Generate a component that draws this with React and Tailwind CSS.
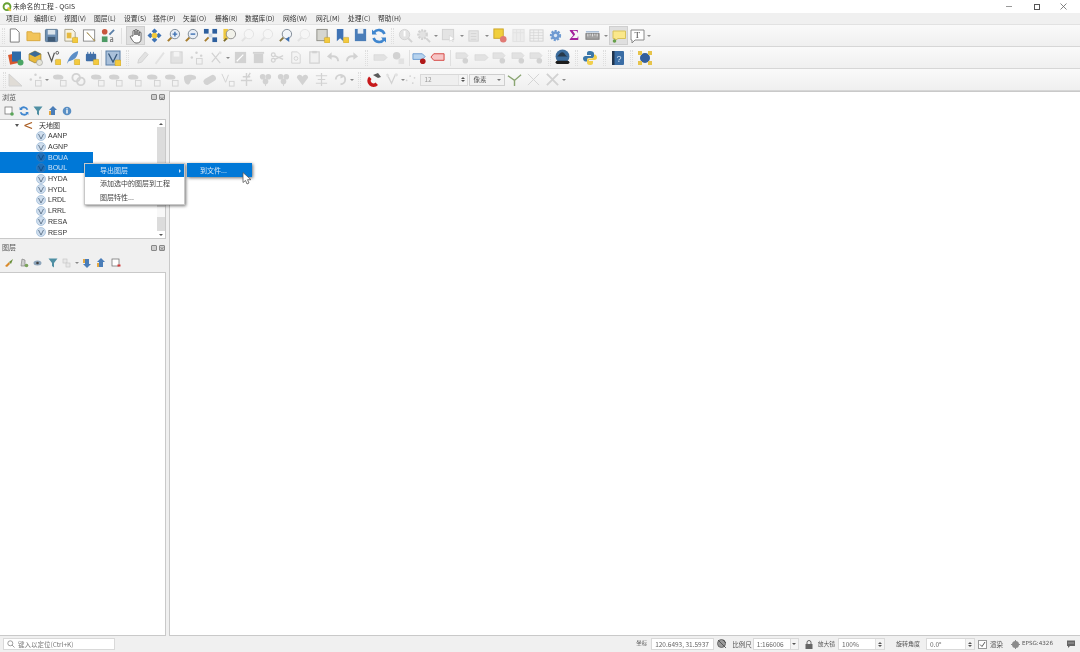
import React from 'react';

const font = 'font-["Noto_Sans_CJK_SC","Liberation_Sans",sans-serif]';

const Svg = ({ children, size = 15 }) => (
  <svg width={size} height={size} viewBox="0 0 16 16" fill="none">{children}</svg>
);

const Badge = ({ c = '#f3c93f' }) => <rect x="10" y="10" width="6" height="6" rx="1" fill={c} stroke="#b89a2a" strokeWidth="0.5" />;
const G = '#d2d2d2';
const G2 = '#e2e2e2';

const icons = {
  newDoc: <Svg><path d="M3.5 1h6l3.5 3.5V15h-9.500z" fill="#fff" stroke="#777" /></Svg>,
  open: <Svg><path d="M1 4h5l1 1.500h8V13.500H1z" fill="#f2c45a" stroke="#d9a73c" /></Svg>,
  save: <Svg><rect x="1.500" y="1.500" width="13" height="13" rx="1" fill="#6d8fb3" stroke="#56738f" /><rect x="4" y="2" width="8" height="5" fill="#dbe4ec" /><rect x="4" y="9.500" width="8" height="5" fill="#3f5a76" /></Svg>,
  saveAs: <Svg><path d="M2 1.500h8l3 3V14H2z" fill="#f7f3e2" stroke="#a5a08a" /><rect x="4" y="5" width="5" height="6" fill="#e6b93e" /><Badge /></Svg>,
  print: <Svg><rect x="1.500" y="2" width="12" height="12" fill="#fff" stroke="#8a8a8a" /><path d="M5 5l6 6 2 3 1-1-3-2-5-6z" fill="#d6b35a" stroke="#8c7a46" strokeWidth="0.5" /></Svg>,
  style: <Svg><circle cx="5" cy="4" r="3" fill="#c8553d" /><rect x="2" y="9" width="6" height="6" fill="#4c9a64" /><path d="M10 7l5-5" stroke="#5a7fa8" strokeWidth="2" /><text x="10" y="15" fontSize="8" fill="#666">a</text></Svg>,
  hand: <Svg size={16}><path d="M5 8V3.500a1 1 0 0 1 2 0V7V2.500a1 1 0 0 1 2 0V7V3.500a1 1 0 0 1 2 0V8V5a1 1 0 0 1 2 0v6c0 2.500-1.500 4-4 4H8c-2 0-3-2-4.500-4L2.500 9.200c-.6-1 .8-1.800 1.500-1z" fill="#fff" stroke="#444" strokeWidth="0.8" /></Svg>,
  pan: <Svg><path d="M8 0.500l3 3-3 3-3-3zM3.500 5l3 3-3 3-3-3zM12.500 5l3 3-3 3-3-3zM8 9.500l3 3-3 3-3-3z" fill="#3f73b5" /><circle cx="8" cy="8" r="3" fill="#f1c93b" /></Svg>,
  zoomIn: <Svg><path d="M2 14l4-4" stroke="#a67c2d" strokeWidth="2.200" /><circle cx="9.500" cy="6.500" r="5" fill="#e8eef6" stroke="#7b8794" /><path d="M7 6.500h5M9.500 4v5" stroke="#3d70b2" strokeWidth="1.500" /></Svg>,
  zoomOut: <Svg><path d="M2 14l4-4" stroke="#a67c2d" strokeWidth="2.200" /><circle cx="9.500" cy="6.500" r="5" fill="#e8eef6" stroke="#7b8794" /><path d="M7 6.500h5" stroke="#3d70b2" strokeWidth="1.500" /></Svg>,
  zoomFull: <Svg><path d="M2 14l4-4" stroke="#a67c2d" strokeWidth="2" /><rect x="1" y="1" width="5" height="5" fill="#2d5f9e" /><rect x="10" y="1" width="5" height="5" fill="#2d5f9e" /><rect x="10" y="10" width="5" height="5" fill="#2d5f9e" /><rect x="6" y="6" width="4" height="4" fill="#cbd8e6" /></Svg>,
  zoomLayer: <Svg><rect x="1.500" y="1" width="5" height="11" fill="#efc840" /><path d="M2 14l3-3" stroke="#7a6a2a" strokeWidth="2" /><circle cx="9.500" cy="6.500" r="5" fill="#f2f2ea" stroke="#8c8c8c" /></Svg>,
  zoomOff: <Svg><path d="M2 14l4-4" stroke={G2} strokeWidth="2" /><circle cx="9.500" cy="6.500" r="5" fill="#f6f6f6" stroke={G2} /></Svg>,
  zoomLast: <Svg><path d="M2 14l4-4" stroke="#8b7a44" strokeWidth="2" /><circle cx="9.500" cy="6.500" r="5" fill="#f2f5f9" stroke="#7d8894" /><path d="M8 12l4-3v6z" fill="#3d70b2" /></Svg>,
  bookmark: <Svg><rect x="2" y="1.500" width="11" height="12" fill="#d6d6d0" stroke="#8e8e86" /><Badge /></Svg>,
  bookmarkBlue: <Svg><path d="M3 1h7v13l-3.500-3L3 14z" fill="#3f73b5" /><Badge /></Svg>,
  mapSave: <Svg><rect x="2" y="1" width="12" height="13" fill="#4a7db8" /><rect x="5" y="1" width="6" height="5" fill="#e8eef4" /></Svg>,
  refresh: <Svg size={16}><path d="M13.500 6A6 6 0 0 0 3 4.500M2.500 10A6 6 0 0 0 13 11.500" stroke="#3f86cf" strokeWidth="2.600" /><path d="M1 1.500v5h5zM15 14.500v-5h-5z" fill="#3f86cf" /></Svg>,
  identify: <Svg><circle cx="7" cy="7" r="5.500" fill={G2} stroke={G} /><rect x="6" y="3" width="2" height="6" fill="#fff" /><path d="M11 11l4 4" stroke={G} strokeWidth="2" /></Svg>,
  gear: <Svg><circle cx="7" cy="7" r="4.500" fill={G2} stroke={G} strokeWidth="2.500" strokeDasharray="2 1.200" /><path d="M11 11l4 4" stroke={G} strokeWidth="2" /></Svg>,
  select: <Svg><rect x="1.500" y="1.500" width="12" height="11" fill="#e4e4e4" stroke={G} /><path d="M9 8l5 3-2 1 1 3-2-2-2 1z" fill="#fff" stroke={G} strokeWidth="0.6" /></Svg>,
  list: <Svg><rect x="2" y="3" width="10" height="11" fill="#e6e6e6" stroke={G} /><path d="M4 6h6M4 9h6M4 12h6" stroke={G} /></Svg>,
  deselect: <Svg><rect x="2" y="1" width="10" height="10" fill="#f1cf3c" stroke="#caa52a" /><circle cx="12" cy="12" r="3.500" fill="#e07a74" /></Svg>,
  table: <Svg><rect x="2" y="1.500" width="12" height="13" fill="#ececec" stroke={G2} /><path d="M6 2v12M10 2v12M2 5h12" stroke={G2} /></Svg>,
  table2: <Svg><rect x="1" y="2" width="14" height="12" fill="#f1f1f1" stroke={G} /><path d="M1 5h14M1 8h14M1 11h14M5 2v12M10 2v12" stroke={G} strokeWidth="0.7" /></Svg>,
  cog: <Svg><circle cx="8" cy="8" r="4.500" fill="#6f9bd2" stroke="#6f9bd2" strokeWidth="3" strokeDasharray="2 1.300" /><circle cx="8" cy="8" r="1.800" fill="#dce8f5" /></Svg>,
  sigma: <span className="text-[15px] leading-none font-bold text-[#a3209c] font-['Liberation_Serif',serif]">Σ</span>,
  ruler: <Svg><rect x="1" y="6" width="14" height="6" fill="#a2a2a2" stroke="#7a7a7a" /><path d="M3 6v3M5.500 6v2M8 6v3M10.500 6v2M13 6v3" stroke="#fff" strokeWidth="0.7" /><rect x="1" y="3.500" width="14" height="1.200" fill="#8ea9c8" /></Svg>,
  tip: <Svg size={16}><path d="M2 3h12.500v7.500H7l-3 2v-2H2z" fill="#fbe88a" stroke="#d8c25c" /><circle cx="3.500" cy="13" r="1.800" fill="#67a04a" /></Svg>,
  textBox: <Svg size={16}><path d="M2 2h13v10H6l-3 3v-3H2z" fill="#fff" stroke="#8a8a8a" /><text x="5.500" y="10" fontSize="9" fontFamily="Liberation Serif" fill="#444">T</text></Svg>,
  addLayers: <Svg size={16}><rect x="1" y="4" width="9" height="10" fill="#d9572c" transform="rotate(-12 5 9)" /><rect x="4" y="1.500" width="9" height="10" fill="#2e6aa8" /><circle cx="12.500" cy="12.500" r="3" fill="#4aa564" /></Svg>,
  addVec: <Svg size={16}><path d="M8 1l6 3v6l-6 3-6-3V4z" fill="#e9b93b" stroke="#8c7222" strokeWidth="0.6" /><path d="M8 1l6 3-6 3-6-3z" fill="#3c6a98" /><circle cx="12.500" cy="12.500" r="3" fill="#e4e4d8" stroke="#888" strokeWidth="0.5" /></Svg>,
  vertex: <Svg><path d="M2 2l4 10 3-9" stroke="#555" strokeWidth="1.300" /><circle cx="12" cy="3" r="1.500" stroke="#555" /><Badge /></Svg>,
  feather: <Svg><path d="M2 15C4 7 8 3 14 1c0 6-4 10-10 11z" fill="#5c8ec7" /><Badge /></Svg>,
  chip: <Svg><rect x="2" y="4" width="11" height="8" rx="1" fill="#3f6ea8" /><path d="M4 2v3M7 2v3M10 2v3" stroke="#3f6ea8" /><Badge /></Svg>,
  vBox: <Svg size={16}><rect x="1" y="1" width="14" height="14" fill="#a9c0da" stroke="#5b7ea6" /><path d="M3.500 3.500L8 12l4-8" stroke="#38577a" strokeWidth="1.300" /><Badge /></Svg>,
  pencil: <Svg><path d="M3 14l1-4 7-8 3 3-7 8z" fill={G2} stroke={G} /></Svg>,
  pen: <Svg><path d="M3 14l9-12 1.500 1.500-9 12z" fill={G2} /></Svg>,
  saveOff: <Svg><rect x="2" y="2" width="12" height="12" fill={G2} stroke={G} /><rect x="5" y="2" width="6" height="5" fill="#f4f4f4" /></Svg>,
  dots: <Svg><circle cx="3" cy="8" r="1.300" fill={G} /><circle cx="8" cy="3" r="1.300" fill={G} /><circle cx="13" cy="6" r="1.300" fill={G} /><rect x="8" y="9" width="6" height="6" fill="#f2f2f2" stroke={G} /></Svg>,
  xNodes: <Svg><path d="M3 3l9 11M12 2L3 13" stroke={G} strokeWidth="1.300" /><circle cx="12" cy="3" r="1.500" fill={G2} /></Svg>,
  editBox: <Svg><rect x="2" y="2" width="12" height="12" fill={G} /><path d="M4 12l7-7" stroke="#fff" strokeWidth="1.300" /></Svg>,
  trash: <Svg><rect x="3" y="4" width="10" height="10" fill={G} /><rect x="2" y="2" width="12" height="2" fill={G} /></Svg>,
  cut: <Svg><circle cx="3.500" cy="5" r="2" stroke={G} strokeWidth="1.300" /><circle cx="3.500" cy="11" r="2" stroke={G} strokeWidth="1.300" /><path d="M5 6l9 4M5 10l9-4" stroke={G} strokeWidth="1.300" /></Svg>,
  copy: <Svg><path d="M4 2h6l3 3v9H4z" fill="#f4f4f4" stroke={G} /><circle cx="8.500" cy="9" r="2" stroke={G} /></Svg>,
  paste: <Svg><rect x="3" y="2" width="10" height="12" fill="#f0f0f0" stroke={G} strokeWidth="1.300" /><rect x="5.500" y="1" width="5" height="2.500" fill={G} /></Svg>,
  undo: <Svg><path d="M13 12c0-4-3-6-8-5" stroke={G} strokeWidth="2.200" /><path d="M6 2.500v8L1 7z" fill={G} /></Svg>,
  redo: <Svg><path d="M3 12c0-4 3-6 8-5" stroke={G} strokeWidth="2.200" /><path d="M10 2.500v8L15 7z" fill={G} /></Svg>,
  label: <Svg><path d="M1 5h11l3 3-3 3H1z" fill={G2} stroke={G} strokeWidth="0.6" /></Svg>,
  labelPin: <Svg><circle cx="6" cy="6" r="4" fill={G} /><rect x="8" y="9" width="6" height="6" fill={G2} /></Svg>,
  labelRed: <Svg><path d="M1 4h10l3 3-3 3H1z" fill="#b7d3ee" stroke="#6b9bd0" /><circle cx="11.500" cy="12" r="3" fill="#b01818" /></Svg>,
  labelPink: <Svg><path d="M4 4h11v7H4L1 7.500z" fill="#f6c5c5" stroke="#d4423e" /></Svg>,
  labelDot: <Svg><path d="M1 3h10l3 3-3 3H1z" fill={G2} stroke={G} strokeWidth="0.6" /><circle cx="11" cy="11.500" r="3" fill={G} /></Svg>,
  globeCar: <Svg size={17}><circle cx="8" cy="7" r="6.500" fill="#3c6c9c" /><path d="M3 7c2-2 3-4 5-4s2 3 5 4" fill="#27394a" /><rect x="1.500" y="11" width="13" height="3" rx="1.500" fill="#1c1c1c" /></Svg>,
  python: <Svg size={16}><path d="M8 1C5 1 5 2.500 5 3.500V5h4v1H3.500C2 6 1 7 1 8.500S2 11.500 3.500 11.500H5V10c0-1.500 1-2 2.500-2h3C12 8 12 6.500 12 5.500v-2C12 2 10.500 1 8 1z" fill="#3b77a8" /><path d="M8 15c3 0 3-1.500 3-2.500V11H7v-1h5.500c1.500 0 2.500-1 2.500-2.500S14 4.500 12.500 4.500H12V6c0 1.500-1 2.500-2.500 2.500h-3C5 8.500 5 10 5 11v1.500C5 14 5.500 15 8 15z" fill="#f1cf4c" /></Svg>,
  help: <Svg size={16}><rect x="2" y="1" width="12" height="14" rx="1" fill="#3a6da5" /><rect x="2" y="1" width="2.500" height="14" fill="#20344d" /><text x="6.500" y="11.500" fontSize="9" fill="#cfe0f2" fontFamily="Liberation Sans">?</text></Svg>,
  plugin: <Svg size={16}><path d="M3 3l10 10M13 3L3 13" stroke="#6c8a34" strokeWidth="1" /><circle cx="8" cy="8" r="5" fill="#335e9c" /><rect x="1" y="1" width="4" height="4" fill="#e6c34a" /><rect x="11" y="1" width="4" height="4" fill="#e6c34a" /><rect x="1" y="11" width="4" height="4" fill="#e6c34a" /><rect x="11" y="11" width="4" height="4" fill="#e6c34a" /></Svg>,
  digit: <Svg size={16}><path d="M1 14V2l13 12z" fill="#e0dcd6" stroke={G} /></Svg>,
  blobs: <Svg><path d="M1 5c0-3 10-3 11 0s-3 3-5 3-6 0-6-3z" fill={G} /><rect x="9" y="9" width="6" height="6" fill="#f2f2f2" stroke={G} /></Svg>,
  rings: <Svg><circle cx="5.500" cy="6" r="4" stroke={G} strokeWidth="2" /><circle cx="10.500" cy="10" r="4" stroke={G} strokeWidth="2" /></Svg>,
  blob: <Svg><path d="M1 6c0-4 13-4 13 0 0 3-5 1-6 4s-2 4-4 3-3-4-3-7z" fill={G} /></Svg>,
  pill: <Svg><rect x="1" y="5" width="14" height="7" rx="3.500" fill={G} transform="rotate(-30 8 8)" /></Svg>,
  splitV: <Svg><path d="M2 2l4 9 3-8" stroke={G} /><rect x="10" y="10" width="5" height="5" fill="#f5f5f5" stroke={G} /></Svg>,
  cross: <Svg><path d="M8 1v14M4 5h8M2 9h12M12 1l-3 5" stroke={G} strokeWidth="1.500" /></Svg>,
  clover: <Svg><circle cx="5" cy="5" r="3" fill={G} /><circle cx="11" cy="5" r="3" fill={G} /><circle cx="8" cy="10" r="3" fill={G} /><path d="M8 10v5" stroke={G} /></Svg>,
  heart: <Svg><path d="M8 14L2 6c0-4 5-4 6-1 1-3 6-3 6 1z" fill={G} /></Svg>,
  spine: <Svg><path d="M8 1v14M2 4h12M4 8h8M2 12h12" stroke={G} strokeWidth="1.300" /></Svg>,
  rotate: <Svg><path d="M3 8a5 5 0 1 1 5 5" stroke={G} strokeWidth="2" /><path d="M8 2l4 3-4 2z" fill={G} /></Svg>,
  magnet: <Svg size={16}><path d="M3 4.500A6 6 0 1 0 12 13l-2.500-2.500A2.500 2.500 0 1 1 5.500 7z" fill="#c7181a" /><path d="M7 3l5-2 3 4-3 1z" fill="#5a5a5a" /></Svg>,
  vSnap: <Svg><path d="M2 2l5 10 4-9" stroke={G} strokeWidth="1.300" /><circle cx="12" cy="3" r="1.800" fill={G2} /><circle cx="3" cy="4" r="1.500" fill={G2} /></Svg>,
  dotsOff: <Svg><circle cx="3" cy="9" r="1" fill={G} /><circle cx="7" cy="4" r="1" fill={G} /><circle cx="12" cy="6" r="1" fill={G} /><circle cx="10" cy="12" r="1" fill={G} /></Svg>,
  trim: <Svg><path d="M1 4l7 5 7-6M8 9v6" stroke="#8aa572" strokeWidth="1.500" /></Svg>,
  crossOff: <Svg><path d="M2 2l12 12M14 2L2 14" stroke={G} /></Svg>,
  merge: <Svg><path d="M2 2l6 6 6-6M2 14l6-6 6 6" stroke={G} strokeWidth="2" /></Svg>,
};

const T = ({ w = 18.7, name, active }) => (
  <div className={`flex h-[19px] shrink-0 items-center justify-center ${active ? 'bg-[#dfdfdf] border border-[#cfcfcf]' : ''}`} style={{ width: w }}>
    {icons[name]}
  </div>
);
const Grip = ({ w = 8 }) => (
  <div className="flex h-[16px] shrink-0 justify-center" style={{ width: w }}>
    <div className="w-[3px] h-full border-x border-dotted border-[#dedede]" />
  </div>
);
const Dd = ({ w = 6 }) => (
  <div className="flex h-[16px] shrink-0 items-center justify-center" style={{ width: w }}>
    <div className="border-x-[2px] border-t-[2.5px] border-x-transparent border-t-[#8a8a8a]" />
  </div>
);
const Sep = ({ w = 7 }) => (
  <div className="flex h-[16px] shrink-0 justify-center" style={{ width: w }}>
    <div className="w-px h-full bg-[#e0e0e0]" />
  </div>
);

const toolbar1 = ['newDoc', 'open', 'save', 'saveAs', 'print', 'style'];
const toolbar1b = ['pan', 'zoomIn', 'zoomOut', 'zoomFull', 'zoomLayer', 'zoomOff', 'zoomOff', 'zoomLast', 'zoomOff', 'bookmark', 'bookmarkBlue', 'mapSave', 'refresh'];
const toolbar2a = ['addLayers', 'addVec', 'vertex', 'feather', 'chip'];
const toolbar2c = ['trash', 'cut', 'copy', 'paste', 'undo', 'redo'];
const toolbar3a = ['blobs', 'rings', 'blobs', 'blobs', 'blobs', 'blobs', 'blobs', 'blob', 'pill', 'splitV', 'cross', 'clover', 'clover', 'heart', 'spine', 'rotate'];

const Toolbar = ({ children }) => (
  <div className="flex h-[22px] shrink-0 items-center border-b border-[#d6d6d6] bg-gradient-to-b from-[#fafafa] to-[#efefef] pl-[1px]">
    {children}
  </div>
);

const Win = () => (
  <div className="flex h-[13px] shrink-0 items-center bg-white pl-[2px]">
    <svg width="10" height="10" viewBox="0 0 16 16" fill="none"><circle cx="8" cy="7.500" r="5.500" stroke="#66a032" strokeWidth="3" /><path d="M9 9l5 5" stroke="#e6c43a" strokeWidth="3" /></svg>
    <span className="ml-[1px] text-[6.800px] leading-none text-[#333]">未命名的工程 - QGIS</span>
    <div className="ml-auto flex items-center">
      <div className="h-px w-[6px] bg-[#999] mr-[22px]" />
      <div className="mr-[20px] h-[6px] w-[6px] border border-[#555]" />
      <svg width="7" height="7" viewBox="0 0 7 7" className="mr-[13px]"><path d="M0.500 0.500l6 6M6.500 0.500l-6 6" stroke="#666" strokeWidth="0.800" /></svg>
    </div>
  </div>
);

const menus = [
  ['项目(J)', 28], ['编辑(E)', 30], ['视图(V)', 30], ['图层(L)', 30], ['设置(S)', 29], ['插件(P)', 30], ['矢量(O)', 32], ['栅格(R)', 30], ['数据库(D)', 38], ['网络(W)', 33], ['网孔(M)', 32], ['处理(C)', 30], ['帮助(H)', 30],
];

const PanelBtns = () => (
  <div className="ml-auto flex gap-[2px] pr-[1px]">
    <div className="h-[6px] w-[6px] rounded-[1px] border border-[#888] bg-[#cfcfcf]" />
    <div className="flex h-[6px] w-[6px] items-center justify-center rounded-[1px] border border-[#888] bg-[#cfcfcf] text-[5px] leading-none text-[#444]">×</div>
  </div>
);

function VIcon({ dark }) {
  return (
    <svg width="10" height="10" viewBox="0 0 10 10" className="shrink-0">
      <circle cx="5" cy="5" r="4.500" fill={dark ? '#1f6fb8' : '#cfdeee'} stroke={dark ? '#3b7fbd' : '#8fb0d2'} strokeWidth="0.600" />
      <path d="M2.500 3L5 8l2.500-5" stroke={dark ? '#0d4a85' : '#5a7088'} strokeWidth="0.900" fill="none" />
    </svg>
  );
}

const rows = ['AANP', 'AGNP', 'BOUA', 'BOUL', 'HYDA', 'HYDL', 'LRDL', 'LRRL', 'RESA', 'RESP'];

function TreeRow({ name }) {
  const selected = name === 'BOUA' || name === 'BOUL';
  return (
    <div className={`flex h-[10.700px] w-[93px] items-center gap-[2px] pl-[36px] text-[7px] leading-none ${selected ? 'bg-[#0078d7] text-[#cfe2f5]' : 'text-[#333]'}`}>
      <VIcon dark={selected} />
      <span className="font-['Liberation_Sans',sans-serif]">{name}</span>
    </div>
  );
}

const PI = ({ children }) => <div className="flex w-[14.500px] shrink-0 items-center justify-center">{children}</div>;

const Input = ({ w, children, spin, cls = '' }) => (
  <div className={`flex h-[12px] shrink-0 items-center justify-between border border-[#d9d9d9] bg-white pl-[3px] text-[6.500px] leading-none text-[#666] ${cls}`} style={{ width: w }}>
    <span className="whitespace-nowrap">{children}</span>
    {spin && (
      <div className="flex h-full w-[9px] flex-col items-center justify-center gap-[1px] border-l border-[#e2e2e2] bg-[#f4f4f4]">
        <div className="border-x-[2px] border-b-[2px] border-x-transparent border-b-[#555]" />
        <div className="border-x-[2px] border-t-[2px] border-x-transparent border-t-[#555]" />
      </div>
    )}
  </div>
);

const L = ({ children, cls = '' }) => <span className={`shrink-0 whitespace-nowrap leading-none text-[#555] ${cls}`}>{children}</span>;

export default function App() {
  return (
    <div className={`relative flex h-[652px] w-[1080px] flex-col overflow-hidden bg-[#f0f0f0] blur-[0.55px] ${font}`}>
      <Win />
      <div className="flex h-[12px] shrink-0 items-center border-b border-[#e2e2e2] pl-[6px] text-[6.800px] leading-none text-[#333]">
        {menus.map(([m, w]) => (
          <div key={m} className="shrink-0 whitespace-nowrap" style={{ width: w }}>{m}</div>
        ))}
      </div>

      <Toolbar>
        <Grip w={4} />
        {toolbar1.map((n, i) => <T key={i} name={n} />)}
        <Sep w={9} />
        <T name="hand" active w={19} />
        {toolbar1b.map((n, i) => <T key={i} name={n} />)}
        <Grip w={8} />
        <T name="identify" />
        <T name="gear" w={18} />
        <Dd w={7} />
        <T name="select" w={18} />
        <Dd w={8} />
        <T name="list" w={18} />
        <Dd w={6} />
        <T name="deselect" w={19} />
        <T name="table" />
        <T name="table2" />
        <T name="cog" />
        <T name="sigma" />
        <T name="ruler" />
        <Dd w={7} />
        <T name="tip" active w={19} />
        <T name="textBox" w={18} />
        <Dd w={6} />
      </Toolbar>

      <Toolbar>
        <Grip w={6} />
        {toolbar2a.map((n, i) => <T key={i} name={n} />)}
        <Sep w={3} />
        <T name="vBox" />
        <Grip w={11} />
        <T name="pencil" />
        <T name="pen" w={15} />
        <T name="saveOff" w={20} />
        <T name="dots" w={20} />
        <T name="xNodes" w={19} />
        <Dd w={5} />
        <T name="editBox" w={19} />
        {toolbar2c.map((n, i) => <T key={i} name={n} w={i === 0 ? 18 : 18.7} />)}
        <Grip w={10} />
        <T name="label" />
        <T name="labelPin" w={18} />
        <Sep w={3} />
        <T name="labelRed" w={18} />
        <T name="labelPink" w={18} />
        <Sep w={7} />
        <T name="labelDot" w={18} />
        <T name="label" w={18.5} />
        <T name="labelDot" w={18.5} />
        <T name="labelDot" w={18.5} />
        <T name="labelDot" w={18.5} />
        <Grip w={8} />
        <T name="globeCar" w={18} />
        <Grip w={9} />
        <T name="python" w={19} />
        <Grip w={9} />
        <T name="help" w={18} />
        <Grip w={9} />
        <T name="plugin" />
      </Toolbar>

      <Toolbar>
        <Grip w={6} />
        <T name="digit" />
        <T name="dots" />
        <Dd w={6} />
        {toolbar3a.map((n, i) => <T key={i} name={n} />)}
        <Dd w={5} />
        <Grip w={10} />
        <T name="magnet" w={19} />
        <T name="vSnap" w={19} />
        <Dd w={2} />
        <T name="dotsOff" w={14} />
        <Input w={48} spin cls="ml-[2px] !bg-[#efefef] !text-[#999]">12</Input>
        <div className="ml-[1px] flex h-[12px] w-[36px] shrink-0 items-center justify-between border border-[#cfcfcf] bg-[#f2f2f2] px-[3px] text-[6.500px] leading-none text-[#555]">
          像素
          <div className="border-x-[2px] border-t-[2.500px] border-x-transparent border-t-[#777]" />
        </div>
        <T name="trim" />
        <T name="crossOff" />
        <T name="merge" />
        <Dd w={6} />
      </Toolbar>

      <div className="flex min-h-0 flex-1">
        <div className="flex w-[166px] shrink-0 flex-col">
          <div className="flex h-[11px] items-center pl-[2px] pt-[1px] text-[7px] leading-none text-[#555]">
            浏览
            <PanelBtns />
          </div>
          <div className="flex h-[17px] items-center pl-[2px]">
            <PI><svg width="10" height="10" viewBox="0 0 10 10"><rect x="1" y="1" width="7" height="7" fill="#fff" stroke="#666" strokeWidth="0.700" /><circle cx="8" cy="8" r="1.800" fill="#5aa558" /></svg></PI>
            <PI><svg width="10" height="10" viewBox="0 0 16 16" fill="none"><path d="M13.500 6A6 6 0 0 0 3 4.500M2.500 10A6 6 0 0 0 13 11.500" stroke="#3f86cf" strokeWidth="3" /><path d="M1 1.500v5h5zM15 14.500v-5h-5z" fill="#3f86cf" /></svg></PI>
            <PI><svg width="10" height="10" viewBox="0 0 10 10"><path d="M0.500 0.500h9L6 5v4.500L4 8V5z" fill="#4f8fa3" /></svg></PI>
            <PI><svg width="10" height="10" viewBox="0 0 10 10"><path d="M5 0L9 4H7v5H3V4H1z" fill="#4a7db8" /><path d="M1 5h2v4H1z" fill="#e6a942" /></svg></PI>
            <PI><svg width="10" height="10" viewBox="0 0 10 10"><circle cx="5" cy="5" r="4.300" fill="#5a8fc4" /><rect x="4.300" y="4" width="1.400" height="3.500" fill="#fff" /><rect x="4.300" y="2.300" width="1.400" height="1.200" fill="#fff" /></svg></PI>
          </div>
          <div className="relative h-[120px] shrink-0 border-y border-r border-[#c9c9c9] bg-white">
            <div className="flex h-[10.500px] items-center gap-[5px] pl-[15px] text-[7px] leading-none text-[#333]">
              <div className="border-x-[2.500px] border-t-[3px] border-x-transparent border-t-[#555]" />
              <svg width="9" height="7" viewBox="0 0 9 7"><path d="M0.500 3.500L8 0.500M0.500 3.500L8 6.500" stroke="#a85a1e" strokeWidth="1.200" /></svg>
              <span className="ml-[1px]">天地图</span>
            </div>
            {rows.map(r => <TreeRow key={r} name={r} />)}
            <div className="absolute right-0 top-0 flex h-full w-[8px] flex-col bg-white">
              <div className="flex h-[7px] w-full shrink-0 items-center justify-center"><div className="border-x-[2px] border-b-[2.500px] border-x-transparent border-b-[#555]" /></div>
              <div className="h-[80px] w-full bg-[#dcdcdc]" />
              <div className="h-[10px] w-full bg-[#f8f8f8]" />
              <div className="h-[14px] w-full bg-[#dcdcdc]" />
              <div className="flex flex-1 items-center justify-center"><div className="border-x-[2px] border-t-[2.500px] border-x-transparent border-t-[#555]" /></div>
            </div>
          </div>
          <div className="mt-[3px] flex h-[11px] items-center pl-[2px] text-[7px] leading-none text-[#555]">
            图层
            <PanelBtns />
          </div>
          <div className="flex h-[19px] items-center pl-[2px]">
            <PI><svg width="10" height="10" viewBox="0 0 10 10"><path d="M1 8l4-4 1 2-3 3z" fill="#d98a2b" /><path d="M5 4l4-3-2 5z" fill="#6a8f3a" /></svg></PI>
            <PI><svg width="10" height="10" viewBox="0 0 10 10"><path d="M3 1l3 1v6H2z" fill="#cfcfcf" stroke="#777" strokeWidth="0.600" /><circle cx="7.500" cy="7.500" r="1.800" fill="#7aa35a" /></svg></PI>
            <PI><svg width="10" height="10" viewBox="0 0 10 10"><ellipse cx="4.500" cy="5" rx="4" ry="2.500" fill="#8da5bb" /><circle cx="4.500" cy="5" r="1.300" fill="#444" /></svg></PI>
            <PI><svg width="10" height="10" viewBox="0 0 10 10"><path d="M0.500 0.500h9L6 5v4.500L4 8V5z" fill="#4f8fa3" /></svg></PI>
            <PI><svg width="10" height="10" viewBox="0 0 10 10"><rect x="1" y="1" width="4" height="4" fill="#e8e8e8" stroke="#c4c4c4" strokeWidth="0.600" /><rect x="4" y="5" width="4" height="4" fill="#e8e8e8" stroke="#c4c4c4" strokeWidth="0.600" /></svg></PI>
            <Dd w={5} />
            <PI><svg width="10" height="10" viewBox="0 0 10 10"><path d="M5 10L1 6h2V1h4v5h2z" fill="#4a7db8" /><path d="M1 1h2v4H1z" fill="#e6a942" /></svg></PI>
            <PI><svg width="10" height="10" viewBox="0 0 10 10"><path d="M5 0L9 4H7v5H3V4H1z" fill="#4a7db8" /><path d="M1 5h2v4H1z" fill="#e6a942" /></svg></PI>
            <PI><svg width="10" height="10" viewBox="0 0 10 10"><rect x="1" y="1" width="7" height="7" fill="#fff" stroke="#666" strokeWidth="0.700" /><rect x="6.500" y="6.500" width="3" height="2" fill="#d23a3a" /></svg></PI>
          </div>
          <div className="flex-1 border-y border-r border-[#c9c9c9] bg-white" />
        </div>
        <div className="ml-[3px] flex-1 border-y border-l border-[#c9c9c9] bg-white" />
      </div>

      <div className="flex h-[16px] shrink-0 items-center bg-[#f0f0f0] pl-[3px]">
        <div className="flex h-[12px] w-[112px] shrink-0 items-center gap-[3px] border border-[#d9d9d9] bg-white pl-[3px] text-[6.500px] leading-none text-[#777]">
          <svg width="8" height="8" viewBox="0 0 8 8" fill="none"><circle cx="3.300" cy="3.300" r="2.500" stroke="#888" strokeWidth="0.800" /><path d="M5 5l2.500 2.500" stroke="#888" strokeWidth="0.800" /></svg>
          键入以定位(Ctrl+K)
        </div>
        <L cls="ml-auto text-[5.500px]">坐标</L>
        <Input w={63} cls="ml-[4px]">120.6493, 31.5937</Input>
        <svg width="12" height="12" viewBox="0 0 12 12" fill="none" className="ml-[2px] shrink-0 mr-[4px]"><circle cx="5.500" cy="5.500" r="4" fill="#9a9a9a" stroke="#555" strokeWidth="0.800" /><path d="M2 2l8 8M7 2l3 3" stroke="#444" strokeWidth="0.800" /></svg>
        <L cls="text-[6.500px]">比例尺</L>
        <Input w={46} cls="ml-[1px]">1:166006</Input>
        <div className="-ml-[9px] flex h-[12px] w-[9px] items-center justify-center border border-[#d9d9d9] bg-[#f4f4f4]"><div className="border-x-[2px] border-t-[2.500px] border-x-transparent border-t-[#555]" /></div>
        <svg width="8" height="9" viewBox="0 0 8 9" fill="none" className="ml-[6px] shrink-0"><path d="M2 4V2.500a2 2 0 0 1 4 0V4" stroke="#666" /><rect x="0.500" y="4" width="7" height="5" fill="#666" /></svg>
        <L cls="ml-[5px] text-[5.800px]">放大镜</L>
        <Input w={47} spin cls="ml-[3px]">100%</Input>
        <L cls="ml-[11px] text-[6px]">旋转角度</L>
        <Input w={49} spin cls="ml-[6px]">0.0°</Input>
        <div className="ml-[3px] flex h-[9px] w-[9px] shrink-0 items-center justify-center border border-[#999] bg-white">
          <svg width="7" height="7" viewBox="0 0 7 7" fill="none"><path d="M1 3.500l2 2 3-4.500" stroke="#333" strokeWidth="0.800" /></svg>
        </div>
        <L cls="ml-[3px] text-[6.500px]">渲染</L>
        <svg width="9" height="9" viewBox="0 0 9 9" className="ml-[8px] shrink-0"><circle cx="4.500" cy="4.500" r="3.500" fill="#8b8b8b" /><path d="M0 4.500h9M4.500 0v9" stroke="#8b8b8b" /></svg>
        <L cls="ml-[2px] font-['DejaVu_Sans',sans-serif] text-[5.600px]">EPSG:4326</L>
        <svg width="10" height="10" viewBox="0 0 10 10" className="ml-[13px] mr-[4px] shrink-0"><path d="M1 1.500h8v5.500H4L2 9V7H1z" fill="#666" /><path d="M2.500 4h5" stroke="#ddd" strokeDasharray="1 1" /></svg>
      </div>

      {/* context menu over the tree */}
      <div className="absolute left-[84px] top-[163px] z-10 flex h-[42px] w-[101px] flex-col border border-[#c8c8c8] bg-white text-[7px] leading-none text-[#444] shadow-[1px_1px_3px_rgba(0,0,0,0.55)]">
        <div className="flex h-[14px] items-center justify-between bg-[#0078d7] pl-[15px] pr-[3px] text-[#d6e7f8]">
          导出图层
          <div className="border-y-[2px] border-l-[2.500px] border-y-transparent border-l-[#cfe3f7]" />
        </div>
        <div className="flex h-[14px] items-center pl-[15px]">添加选中的图层到工程</div>
        <div className="flex h-[14px] items-center pl-[15px]">图层特性...</div>
      </div>
      <div className="absolute left-[187px] top-[163px] z-10 flex h-[14px] w-[65px] items-center bg-[#0078d7] pl-[13px] text-[7px] leading-none text-[#d6e7f8] shadow-[1px_1px_3px_rgba(0,0,0,0.55)]">
        到文件...
      </div>
      <svg width="10" height="13" viewBox="0 0 10 13" className="absolute left-[242px] top-[172px] z-20"><path d="M1 0.500v10l2.500-2 1.500 3.500 2-1-1.500-3.300H9z" fill="#fff" stroke="#555" strokeWidth="0.800" /></svg>
    </div>
  );
}
